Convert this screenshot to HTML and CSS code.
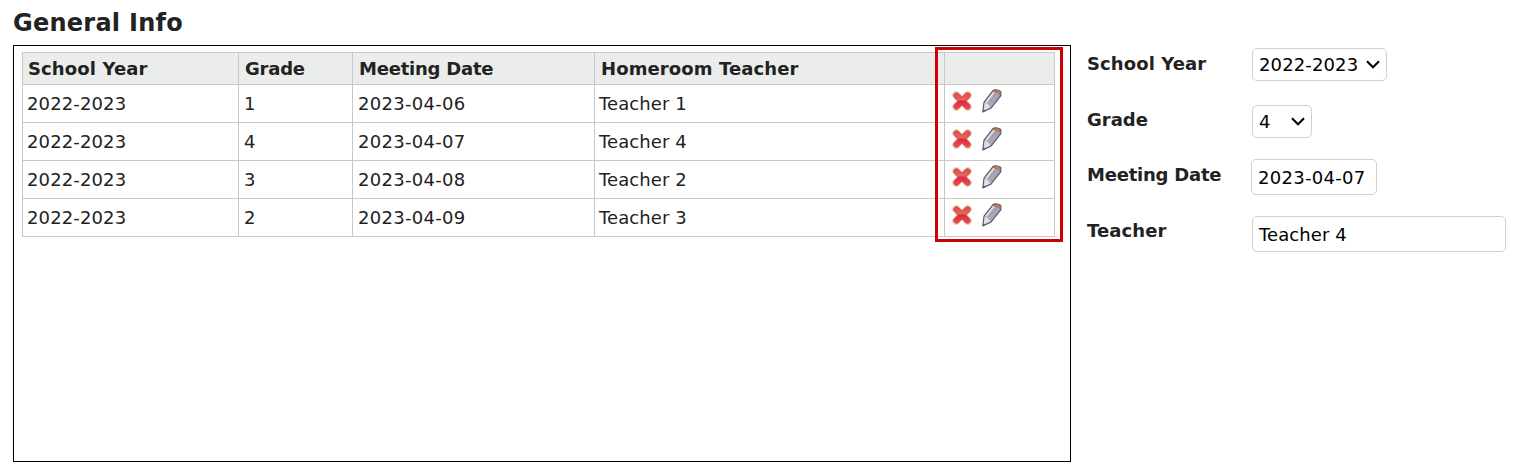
FILE: index.html
```html
<!DOCTYPE html>
<html lang="en">
<head>
<meta charset="utf-8">
<title>General Info</title>
<link rel="stylesheet" href="styles.css">
</head>
<body>
<svg class="sprites" width="0" height="0" aria-hidden="true">
  <defs>
    <linearGradient id="red" x1="0" y1="0" x2="0" y2="1">
      <stop offset="0" stop-color="#de4f4b"/><stop offset=".42" stop-color="#e86662"/><stop offset=".52" stop-color="#dc2a3b"/><stop offset="1" stop-color="#f04353"/>
    </linearGradient>
    <linearGradient id="lead" x1="0" y1="0" x2="1" y2=".7">
      <stop offset="0" stop-color="#d8d5de"/><stop offset=".45" stop-color="#b9b5c2"/><stop offset="1" stop-color="#8b8798"/>
    </linearGradient>
    <symbol id="delete" viewBox="0 0 20 20">
      <path d="M4.2 4.2 15.8 15.8M15.8 4.2 4.2 15.8" fill="none" stroke="#ecd3bb" stroke-width="8" stroke-linecap="round"/>
      <path d="M4.5 4.5 15.5 15.5M15.5 4.5 4.5 15.5" fill="none" stroke="#d4504a" stroke-width="6.3" stroke-linecap="round"/>
      <path d="M4.7 3.1Q3.3 3.5 3.2 4.9L7.8 9.8 3.2 15.1Q3.3 16.5 4.9 16.8L10 12.5 15.1 16.8Q16.7 16.5 16.8 15.1L12.2 9.8 16.8 4.9Q16.7 3.5 15.3 3.1L10 7.4Z" fill="url(#red)" stroke="url(#red)" stroke-width="1.8" stroke-linejoin="round"/>
    </symbol>
    <symbol id="edit" viewBox="0 0 20 24">
      <path d="M.8 22.9 2 13.2 11.2 1.3 13.2.7Q16.9.7 18.8 2.3L18.9 6.6 9.2 19Z" fill="url(#lead)" stroke="#57546a" stroke-width="1.1" stroke-linejoin="round"/>
      <path d="M1.8 21.3 2.8 13.9 5.8 15 8.4 18.5Z" fill="#e2deea"/>
      <path d="M6.3 14.4 15 3.8" fill="none" stroke="#8a8697" stroke-width=".8"/>
      <path d="M4.1 13.1 12.1 3" fill="none" stroke="#efedf2" stroke-width="1.2"/>
      <path d="M12 1.4Q16.2.7 18.3 2.7L18.3 5.5Q15.8 3 11.7 2.9Z" fill="#cf7c45" stroke="#7c5040" stroke-width=".4"/>
      <path d="M.8 22.9 1.4 20.4 3.4 21.7Z" fill="#5a536c"/>
    </symbol>
    <symbol id="chevron" viewBox="0 0 14 9">
      <path d="M1 1.2 7 7.2 13 1.2" fill="none" stroke="#000" stroke-width="2.1"/>
    </symbol>
  </defs>
</svg>
<h1 class="title">General Info</h1>
<main class="content">
  <section class="panel">
    <table class="records">
      <colgroup><col class="col-year"><col class="col-grade"><col class="col-date"><col class="col-teacher"><col class="col-actions"></colgroup>
      <thead><tr><th class="first">School Year</th><th class="tight">Grade</th><th class="tight">Meeting Date</th><th class="wide">Homeroom Teacher</th><th></th></tr></thead>
      <tbody>
        <tr><td class="first">2022-2023</td><td>1</td><td class="day">2023-04-06</td><td class="name">Teacher 1</td><td><div class="actions"><svg class="delete"><use href="#delete"/></svg><svg class="edit"><use href="#edit"/></svg></div></td></tr>
        <tr><td class="first">2022-2023</td><td>4</td><td class="day">2023-04-07</td><td class="name">Teacher 4</td><td><div class="actions"><svg class="delete"><use href="#delete"/></svg><svg class="edit"><use href="#edit"/></svg></div></td></tr>
        <tr><td class="first">2022-2023</td><td>3</td><td class="day">2023-04-08</td><td class="name">Teacher 2</td><td><div class="actions"><svg class="delete"><use href="#delete"/></svg><svg class="edit"><use href="#edit"/></svg></div></td></tr>
        <tr><td class="first">2022-2023</td><td>2</td><td class="day">2023-04-09</td><td class="name">Teacher 3</td><td><div class="actions"><svg class="delete"><use href="#delete"/></svg><svg class="edit"><use href="#edit"/></svg></div></td></tr>
      </tbody>
    </table>
    <div class="highlight"></div>
  </section>
  <section class="form">
    <div class="field"><span class="label lower wide">School Year</span><div class="control select year"><span>2022-2023</span><svg class="chevron"><use href="#chevron"/></svg></div></div>
    <div class="field"><span class="label lower">Grade</span><div class="control select grade"><span>4</span><svg class="chevron"><use href="#chevron"/></svg></div></div>
    <div class="field"><span class="label tight">Meeting Date</span><div class="control date">2023-04-07</div></div>
    <div class="field"><span class="label wide">Teacher</span><div class="control teacher">Teacher 4</div></div>
  </section>
</main>
</body>
</html>
```
FILE: styles.css
```css
* { box-sizing: border-box; }
body { margin: 0; padding: 0 0 0 13px; background: #fff; color: #222; font: 18px/22px Verdana, "DejaVu Sans", sans-serif; }
.sprites { position: absolute; }
.title { margin: 0; height: 45px; padding-top: 9px; font-size: 24px; line-height: 28px; font-weight: bold; letter-spacing: .25px; }
.content { display: flex; }
.panel { position: relative; width: 1058px; height: 417px; border: 1px solid #000; padding: 6px 8px; }
.records { table-layout: fixed; width: 1033px; border-spacing: 0; border-top: 1px solid #c8c8c8; border-left: 1px solid #c8c8c8; }
.col-year { width: 216px; }
.col-grade { width: 114px; }
.col-date { width: 242px; }
.col-teacher { width: 350px; }
.col-actions { width: 110px; }
.records th, .records td { border-right: 1px solid #c8c8c8; border-bottom: 1px solid #c8c8c8; text-align: left; white-space: nowrap; }
.records th { height: 32px; padding: 0 6px; background: #ebedec; }
.records td { height: 38px; padding: 0 5px; letter-spacing: .04px; }
.records th.first { padding-left: 5px; letter-spacing: .12px; }
.records td.first { padding-left: 4px; letter-spacing: .13px; }
.records td.day { letter-spacing: .3px; }
.records td.name { padding-left: 4px; letter-spacing: .08px; }
.tight { letter-spacing: -.22px; }
.wide { letter-spacing: .1px; }
.actions { display: flex; align-items: center; gap: 10px; padding: 0 0 5px 2px; }
.delete { width: 20px; height: 20px; }
.edit { width: 20px; height: 24px; }
.highlight { position: absolute; left: 921px; top: 1px; width: 128px; height: 195px; border: 3px solid #c00; }
.form { padding-left: 16px; padding-top: 3px; }
.field { display: flex; align-items: flex-start; height: 56px; }
.label { width: 165px; padding-top: 4px; font-weight: bold; }
.lower { padding-top: 5px; }
.control { border: 1px solid #d0d0d3; border-radius: 5px; padding: 0 6px; color: #000; white-space: nowrap; letter-spacing: .13px; }
.select { display: flex; align-items: center; justify-content: space-between; height: 33px; }
.year { width: 135px; }
.grade { width: 60px; margin-top: 1px; }
.date { width: 126px; height: 36px; line-height: 35px; margin: -1px 0 0 -1px; letter-spacing: .3px; }
.teacher { width: 254px; height: 36px; line-height: 35px; }
.teacher { letter-spacing: .08px; }
.chevron { width: 14px; height: 9px; }
```
